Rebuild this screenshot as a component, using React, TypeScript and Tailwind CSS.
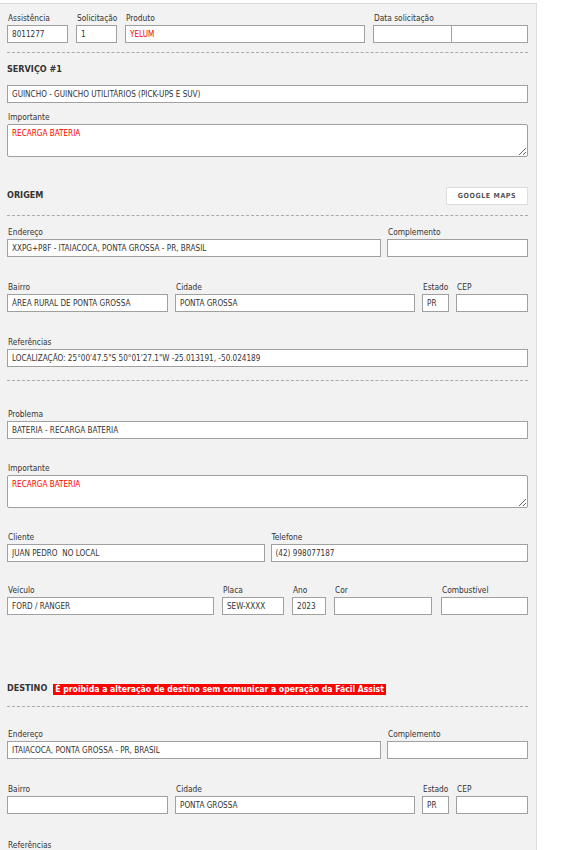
import React from 'react'

const FONT = "font-['DejaVu_Sans_Condensed','Liberation_Sans',sans-serif]"

type FieldProps = {
  label?: string
  value?: string
  red?: boolean
  className?: string
}

function Label({ children }: { children: React.ReactNode }) {
  return (
    <div className="h-[12px] leading-[12px] mb-[1px] pl-px text-[8.3px] text-[#333] whitespace-nowrap">
      {children}
    </div>
  )
}

function TextBox({ value, red }: { value?: string; red?: boolean }) {
  return (
    <input
      readOnly
      value={value ?? ''}
      className={`block w-full h-[18px] border border-[#a0a0a0] bg-white px-[4px] text-[8.1px] outline-none ${red ? 'text-[#f00]' : 'text-[#333]'}`}
    />
  )
}

function Field({ label, value, red, className }: FieldProps) {
  return (
    <div className={className}>
      {label !== undefined && <Label>{label}</Label>}
      <TextBox value={value} red={red} />
    </div>
  )
}

function Note({ label, value, className }: { label: string; value: string; className?: string }) {
  return (
    <div className={className}>
      <Label>{label}</Label>
      <textarea
        readOnly
        value={value}
        className="block w-full h-[33px] border border-[#a0a0a0] rounded-[2px] bg-white px-[4px] pt-[3px] pb-[2px] text-[8.1px] leading-[11px] text-[#f00] outline-none"
      />
    </div>
  )
}

function Dashed({ className }: { className?: string }) {
  return <div className={`border-t border-dashed border-[#aaa] ${className ?? ''}`} />
}

function SectionTitle({ children }: { children: React.ReactNode }) {
  return <span className="font-bold text-[9px] text-[#333] whitespace-nowrap">{children}</span>
}

function Address({ endereco, bairro, cidade, estado }: {
  endereco: string
  bairro: string
  cidade: string
  estado: string
}) {
  return (
    <>
      <div className="flex gap-[6px]">
        <Field label="Endereço" value={endereco} className="w-[374px]" />
        <Field label="Complemento" className="flex-1" />
      </div>
      <div className="flex gap-[7px] mt-[24px]">
        <Field label="Bairro" value={bairro} className="w-[161px]" />
        <Field label="Cidade" value={cidade} className="w-[240px]" />
        <Field label="Estado" value={estado} className="w-[27px]" />
        <Field label="CEP" className="flex-1" />
      </div>
    </>
  )
}

export default function App() {
  return (
    <div className={`${FONT} min-h-screen bg-white`}>
      <div className="w-[537px] mt-[3px] bg-[#f2f2f2] border-t border-r border-[#dcdcdc] pl-[7px] pr-[8px] pt-[8px] pb-[40px]">
        {/* Cabeçalho */}
        <div className="flex gap-[8px]">
          <Field label="Assistência" value="8011277" className="w-[61px]" />
          <Field label="Solicitação" value="1" className="w-[41px]" />
          <Field label="Produto" value="YELUM" red className="w-[240px]" />
          <div className="flex-1">
            <Label>Data solicitação</Label>
            <div className="flex">
              <div className="w-[79px]"><TextBox /></div>
              <div className="flex-1 -ml-px"><TextBox /></div>
            </div>
          </div>
        </div>

        <Dashed className="mt-[9px]" />

        {/* Serviço */}
        <div className="flex items-center h-[18px] mt-[8px]">
          <SectionTitle>SERVIÇO #1</SectionTitle>
        </div>
        <Field value="GUINCHO - GUINCHO UTILITÁRIOS (PICK-UPS E SUV)" className="mt-[6px]" />
        <Note label="Importante" value="RECARGA BATERIA" className="mt-[8px]" />

        {/* Origem */}
        <div className="flex items-center justify-between h-[18px] mt-[30px]">
          <SectionTitle>ORIGEM</SectionTitle>
          <button className="w-[82px] h-[18px] border border-[#dedede] bg-white text-[7px] font-bold tracking-[0.6px] text-[#555]">
            GOOGLE MAPS
          </button>
        </div>
        <Dashed className="mt-[10px]" />
        <div className="mt-[10px]">
          <Address
            endereco="XXPG+P8F - ITAIACOCA, PONTA GROSSA - PR, BRASIL"
            bairro="ÁREA RURAL DE PONTA GROSSA"
            cidade="PONTA GROSSA"
            estado="PR"
          />
        </div>
        <Field
          label="Referências"
          value={'LOCALIZAÇÃO: 25°00\'47.5"S 50°01\'27.1"W -25.013191, -50.024189'}
          className="mt-[24px]"
        />

        <Dashed className="mt-[13px]" />

        {/* Problema */}
        <Field label="Problema" value="BATERIA - RECARGA BATERIA" className="mt-[27px]" />
        <Note label="Importante" value="RECARGA BATERIA" className="mt-[23px]" />

        <div className="flex gap-[6px] mt-[23px]">
          <Field label="Cliente" value="JUAN PEDRO  NO LOCAL" className="flex-1" />
          <Field label="Telefone" value="(42) 998077187" className="flex-1" />
        </div>

        <div className="flex mt-[22px]">
          <Field label="Veículo" value="FORD / RANGER" className="w-[207px]" />
          <Field label="Placa" value="SEW-XXXX" className="w-[62px] ml-[8px]" />
          <Field label="Ano" value="2023" className="w-[34px] ml-[8px]" />
          <Field label="Cor" className="w-[98px] ml-[8px]" />
          <Field label="Combustível" className="flex-1 ml-[9px]" />
        </div>

        {/* Destino */}
        <div className="flex items-center h-[18px] mt-[65px]">
          <SectionTitle>DESTINO</SectionTitle>
          <span className="ml-[6px] h-[11px] leading-[11px] px-[2px] bg-[#f00] text-white font-bold text-[8.6px] whitespace-nowrap">
            É proibida a alteração de destino sem comunicar a operação da Fácil Assist
          </span>
        </div>
        <Dashed className="mt-[8px]" />
        <div className="mt-[21px]">
          <Address
            endereco="ITAIACOCA, PONTA GROSSA - PR, BRASIL"
            bairro=""
            cidade="PONTA GROSSA"
            estado="PR"
          />
        </div>
        <Field label="Referências" className="mt-[25px]" />
      </div>
    </div>
  )
}
